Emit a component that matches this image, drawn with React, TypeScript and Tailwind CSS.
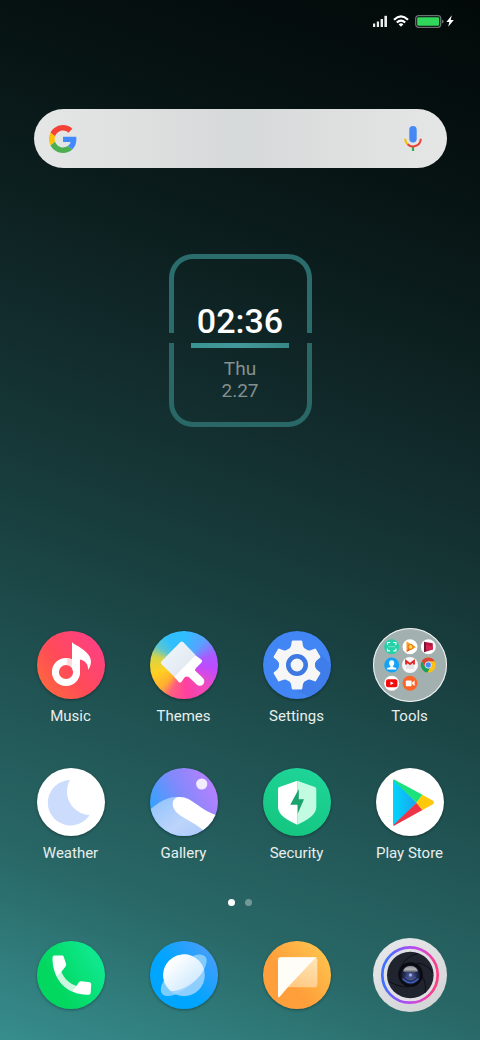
import type { ReactNode } from 'react';
import clsx from 'clsx';

interface LauncherApp {
  name: string;
  /** Classes for the round plate behind the glyph */
  plate: string;
  glyph: ReactNode;
  /** Large icons fill a 74px plate instead of 68px */
  large?: boolean;
}

function StatusBar() {
  return (
    <header className="flex h-[42px] items-center justify-end pr-[26px]">
      <svg className="h-3 w-[14px]" viewBox="0 0 14 12" fill="#e8ecec" aria-label="Signal">
        <rect x="0" y="8.5" width="2.2" height="3.5" />
        <rect x="3.8" y="6.5" width="2.2" height="5.5" />
        <rect x="7.6" y="4" width="2.4" height="8" />
        <rect x="11.4" y="0.8" width="2.6" height="11.2" />
      </svg>
      <svg className="ml-1.5 h-3 w-4" viewBox="0 0 16 12" aria-label="Wi-Fi">
        <g fill="none" stroke="#fff" strokeWidth="2.2">
          <path d="M1 4.7Q8-1.9 15 4.7" />
          <path d="M3.8 7.5Q8 3.7 12.2 7.5" />
        </g>
        <path d="M5.6 9.2Q8 7.4 10.4 9.2L8 11.8Z" fill="#fff" />
      </svg>
      <svg className="ml-1.5 h-[13px] w-[29px]" viewBox="0 0 29 13" aria-label="Battery">
        <rect x="0.7" y="0.7" width="25" height="11.6" rx="2.8" fill="none" stroke="#6b7070" strokeWidth="1.3" />
        <rect x="2.2" y="2.2" width="22" height="8.6" rx="1.4" fill="#30d75b" />
        <path d="M27 4.5q1.6.4 1.6 2t-1.6 2z" fill="#6b7070" />
      </svg>
      <svg className="ml-0.5 h-3 w-2" viewBox="0 0 8 12" fill="#fff" aria-label="Charging">
        <path d="M5.8.3.4 6.9h2.9L2.2 11.7 7.8 5H4.7z" />
      </svg>
    </header>
  );
}

function SearchBar() {
  return (
    <form
      role="search"
      onSubmit={(e) => e.preventDefault()}
      className="mr-[33px] ml-[34px] mt-[67px] flex h-[59px] items-center rounded-full bg-linear-to-r from-[#e5e7e6] via-[#d6d9d9] to-[#e5e7e6] pr-[25px] pl-[15px]"
    >
      <svg className="size-7 shrink-0" viewBox="0 0 48 48" aria-hidden="true">
        <path fill="#f44336" d="M24 9.5c3.54 0 6.71 1.22 9.21 3.6l6.85-6.85C35.9 2.38 30.47 0 24 0 14.62 0 6.51 5.38 2.56 13.22l7.98 6.19C12.43 13.72 17.74 9.5 24 9.5z" />
        <path fill="#448aff" d="M46.98 24.55c0-1.57-.15-3.09-.38-4.55H24v9.02h12.94c-.58 2.96-2.26 5.48-4.78 7.18l7.73 6c4.51-4.18 7.09-10.36 7.09-17.65z" />
        <path fill="#ffc107" d="M10.53 28.59c-.48-1.45-.76-2.99-.76-4.59s.27-3.14.76-4.59l-7.98-6.19C.92 16.46 0 20.12 0 24c0 3.88.92 7.54 2.56 10.78l7.97-6.19z" />
        <path fill="#4caf50" d="M24 48c6.48 0 11.93-2.13 15.89-5.81l-7.73-6c-2.15 1.45-4.92 2.3-8.16 2.3-6.26 0-11.57-4.22-13.47-9.91l-7.98 6.19C6.51 42.62 14.62 48 24 48z" />
      </svg>
      <input type="text" aria-label="Search" className="h-full min-w-0 flex-1 bg-transparent px-3 text-lg text-gray-800 outline-none" />
      <button type="button" aria-label="Voice search">
        <svg className="h-[25px] w-[18px]" viewBox="0 0 18 25" aria-hidden="true">
          <rect x="5.3" y="0" width="7.4" height="16.4" rx="3.7" fill="#4688f4" />
          <path d="M1.2 12.7A7.8 7.8 0 0 0 4 18.6" fill="none" stroke="#fbbc05" strokeWidth="2" />
          <path d="M9 20v5" stroke="#34a853" strokeWidth="2.2" />
          <path d="M3.6 18.2A7.8 7.8 0 0 0 16.8 12.7" fill="none" stroke="#ea4335" strokeWidth="2" />
        </svg>
      </button>
    </form>
  );
}

function ClockWidget() {
  return (
    <section aria-label="Clock" className="relative mx-auto mt-[86px] flex h-[173px] w-[143px] flex-col items-center pt-[46px]">
      {/* Split frame */}
      <div className="absolute inset-x-0 top-0 h-[79px] rounded-t-[24px] border-x-[5px] border-t-[5px] border-[#2b6c6c]" />
      <div className="absolute inset-x-0 bottom-0 h-[84px] rounded-b-[24px] border-x-[5px] border-b-[5px] border-[#2a6868]" />

      <time className="text-[34px] leading-[42px] font-medium text-white">02:36</time>
      <div className="mt-px h-[5px] w-[98px] bg-linear-to-r from-[#3a9492] via-[#43999a] to-[#378886]" />
      <p className="mt-2.5 text-center text-[19px] leading-[22px] text-[#84918f]">
        Thu
        <br />
        2.27
      </p>
    </section>
  );
}

const musicGlyph = (
  <>
    <circle cx="29" cy="41" r="10.6" fill="none" stroke="#fff" strokeWidth="7" />
    <path d="M30 30.4A10.600 10.600 0 0 1 36 33" fill="none" stroke="#ffc2c6" strokeWidth="7" opacity="0.6" />
    <path d="M35 11c2 2.600 6 3.600 11 7.500 9 6.500 10 13.500 5 20.500.5-6-3-9.500-8-10.500V41l-8-3z" fill="#fff" />
  </>
);

const themesGlyph = (
  <>
    <defs>
      <linearGradient id="bristle" x1="0" y1="0" x2="1" y2="1">
        <stop offset="0" stopColor="#f4f8fd" />
        <stop offset="1" stopColor="#dbe4ee" />
      </linearGradient>
    </defs>
    <path d="M39 40 49.800 50.300" stroke="#fff" strokeWidth="9" strokeLinecap="round" />
    <path d="M45 24 51.500 28.700q1.400 1.400 0 2.800L46 37q-2 2.500 0 5L38 46q-2-1-3.500.5L31.300 51q-1.300 1.200-2.600 0L24 45.500z" fill="#fff" />
    <path d="M30.500 11q1.300-1.200 2.600 0L45.600 24 24.300 45.700 11.300 33q-1.200-1.300 0-2.600z" fill="url(#bristle)" />
  </>
);

const GEAR_TEETH = [0, 60, 120, 180, 240, 300];

const settingsGlyph = (
  <>
    <path d="M51 17 75 40 60 72 34 60z" fill="#3976df" opacity="0.5" />
    {GEAR_TEETH.map((angle) => (
      <path
        key={angle}
        d="M24 19Q27.600 17.500 28 15L28.700 10.500Q28.900 9.600 29.900 9.600H38.100Q39.100 9.600 39.300 10.500L40 15Q40.400 17.500 44 19L34 34Z"
        fill="#f6f6f6"
        transform={`rotate(${angle} 34 34)`}
      />
    ))}
    <circle cx="34" cy="34" r="17.5" fill="#f6f6f6" />
    <circle cx="34" cy="34" r="8.7" fill="#f6f6f6" stroke="#3d78e3" strokeWidth="4.6" />
  </>
);

const toolsGlyph = (
  <>
    {/* Scanner */}
    <circle cx="18.7" cy="18.7" r="7.5" fill="#26d0a8" />
    <path d="M14.500 17v-2.500h2.700M20.200 14.500h2.700V17M22.900 20.400v2.500h-2.700M17.200 22.900h-2.700v-2.500" fill="none" stroke="#e3fff6" strokeWidth="1.2" />
    <path d="M15 18.700h7.400" stroke="#7fe6cc" strokeWidth="0.8" />

    {/* Play Music */}
    <circle cx="37" cy="18.7" r="7.5" fill="#fff" />
    <path d="M33.500 13.500 43 18.900l-9.500 5z" fill="#f9a01b" />
    <path d="m33.500 24 2.500-5.500 5 1.600z" fill="#ee5a24" />
    <circle cx="37.600" cy="18.900" r="2.5" fill="#ffd54a" stroke="#e86a1c" strokeWidth="1" />

    {/* Play Movies */}
    <circle cx="55.3" cy="18.7" r="7.5" fill="#fff" />
    <path d="m51 13.800 8.800 1.400v6.200L51 24.300z" fill="#b5163d" />
    <path d="m53 17 6.800 1.400v3L53 22z" fill="#d32450" />
    <path d="M51 13.800v10.500l2-1.500v-7.500z" fill="#6c1737" />

    {/* Contacts */}
    <circle cx="18.7" cy="37" r="7.5" fill="#14a4f5" />
    <path d="M18.700 32.200c3.300 0 3 4.500 1.200 5.800v1l3.400 1.100v1.500h-9.200v-1.500l3.400-1.100v-1c-1.800-1.300-2.100-5.800 1.200-5.800z" fill="#fff" />

    {/* Mail */}
    <circle cx="37" cy="37" r="8" fill="#f7f7f7" />
    <path d="M33 36h8v5h-8z" fill="#e4e4e6" />
    <path d="M33.100 36.500v-3.500l3.900 3 3.900-3v3.500" fill="none" stroke="#e32828" strokeWidth="2" />

    {/* Chrome */}
    <circle cx="55.3" cy="37" r="7.5" fill="#fbc116" />
    <path d="M48.800 33.300a7.500 7.500 0 0 1 13 0h-6.500L52 39z" fill="#db4437" />
    <path d="M48.800 33.300 52.300 39.200l4.500 1.300-2.500 4A7.500 7.500 0 0 1 48.800 33.300z" fill="#189f5b" />
    <circle cx="55.3" cy="37" r="3.2" fill="#4c8bf5" stroke="#e9edf5" strokeWidth="0.9" />

    {/* YouTube */}
    <circle cx="18.7" cy="55.3" r="7.5" fill="#fff" />
    <rect x="13" y="51.3" width="11.4" height="8" rx="2" fill="#f20d0d" />
    <path d="m17.500 53.500 3.300 1.800-3.300 1.800z" fill="#fff" />

    {/* Recorder */}
    <circle cx="37" cy="55.3" r="7.5" fill="#fc6527" />
    <rect x="32.8" y="52.4" width="5.8" height="5.8" rx="1" fill="#fff" />
    <path d="m39.200 54.600 2.400-2v5.400l-2.400-2z" fill="#fff" />
  </>
);

const weatherGlyph = <path d="M33 12A22.700 22.700 0 1 0 52.600 47 23.500 23.500 0 0 1 33 12z" fill="#cbdcfc" />;

const galleryGlyph = (
  <>
    <defs>
      <linearGradient id="dune" x1="0" y1="0" x2="1" y2="1">
        <stop offset="0" stopColor="#8dc2fd" />
        <stop offset="0.6" stopColor="#bdd4fb" />
        <stop offset="1" stopColor="#a9c9fa" />
      </linearGradient>
    </defs>
    <circle cx="51.7" cy="16" r="5.6" fill="#f1edfe" />
    <path d="M0 41.500C9 34 18 28 28 29l30 33v6H0z" fill="url(#dune)" />
    <path d="M28 29c8-.5 12 2.500 19 7.500 6 4.500 12 8.500 20 11l-7 20-7.500-6C44 55 38 52.500 31 48c-11-7.500-10-17-3-19z" fill="#fff" />
  </>
);

const securityGlyph = (
  <>
    <path d="M34.300 12.700 16.500 19q-1.500.5-1.500 2v18c0 8 9.500 13.500 19.300 17.700z" fill="#fff" />
    <path d="M34.300 12.700 51.800 19q1.500.5 1.500 2v18c0 8-9.500 13.500-19 17.700z" fill="#c2fae2" />
    <path d="M35.800 21v10.300H41l-6.300 14.500v-9.100h-7.500z" fill="#1ba36e" />
  </>
);

const playGlyph = (
  <>
    <defs>
      <linearGradient id="play-blue" x1="0" y1="0" x2="1" y2="0">
        <stop offset="0" stopColor="#00d5fd" />
        <stop offset="1" stopColor="#1ba5ef" />
      </linearGradient>
    </defs>
    <path d="M17 13v43q0 2 1.500 1.400L40.500 34.700 18.500 11.800Q17 11.200 17 13z" fill="url(#play-blue)" />
    <path d="M18.500 11.700 46.500 26.800 40.500 34.700 17.500 12.300Q17.700 11.300 18.500 11.700z" fill="#1be27b" />
    <path d="M18.500 57.600 46.500 42 40.500 34.700 17.500 57Q17.700 58 18.500 57.600z" fill="#ee3548" />
    <path d="M46.300 26.800 57 32.800q2 1.700 0 3.400L46.300 42l-6-7.300z" fill="#ffc80a" />
  </>
);

const phoneGlyph = (
  <>
    <path d="M17.500 14.600h7.700q1.200 0 1.500 1.200l2.400 7.200q.3 1.200-.5 2.200L24.300 31c2.700 6.500 8 11.500 15 14l2.700-3.800q.9-1.200 2.300-1l8.400 1q1.600.3 1.500 2l-.5 8.500q-.1 2-2 2C31.500 54.500 15.300 40 15.500 16.800q0-2.200 2-2.200z" fill="#fff" />
    <path d="M24.300 31c2.700 6.500 8 11.500 15 14l-4 5.500C29 48 22.500 42 20 35z" fill="#8eeab8" opacity="0.45" />
  </>
);

const browserGlyph = (
  <>
    <defs>
      <linearGradient id="planet" x1="0" y1="0" x2="1" y2="1">
        <stop offset="0.2" stopColor="#fff" />
        <stop offset="0.8" stopColor="#cfeafe" />
      </linearGradient>
    </defs>
    <ellipse cx="33.700" cy="34.300" rx="28.500" ry="12" transform="rotate(-41 33.700 34.300)" fill="#8fd3fb" opacity="0.85" />
    <circle cx="34" cy="34.3" r="20.8" fill="#a5d6ff" opacity="0.85" />
    <path d="M20.500 50A20.800 20.800 0 1 1 54 28.500C48 40 33 50.500 20.500 50z" fill="url(#planet)" />
  </>
);

const messagesGlyph = (
  <>
    <defs>
      <linearGradient id="bubble" x1="0.7" y1="0" x2="0.3" y2="1">
        <stop offset="0" stopColor="#ffe3b4" />
        <stop offset="1" stopColor="#ffc981" />
      </linearGradient>
    </defs>
    <path d="M18 16.200h34q2.300 0 2.300 2.300V44q0 2.300-2.300 2.300H24z" fill="url(#bubble)" />
    <path d="M17.300 16.200H53L25 46l-8.500 10q-1.500 1-1.500-1V18.500q0-2.300 2.300-2.300z" fill="#fffdf7" />
  </>
);

const cameraGlyph = (
  <>
    <defs>
      <linearGradient id="cam-ring" x1="0" y1="0.6" x2="1" y2="0.7">
        <stop offset="0.05" stopColor="#4070ff" />
        <stop offset="0.4" stopColor="#a44df5" />
        <stop offset="0.65" stopColor="#d04ad8" />
        <stop offset="0.95" stopColor="#ff3d82" />
      </linearGradient>
      <radialGradient id="cam-lens" cx="0.5" cy="0.55" r="0.5">
        <stop offset="0" stopColor="#5a6cae" />
        <stop offset="0.55" stopColor="#28335f" />
        <stop offset="1" stopColor="#10142a" />
      </radialGradient>
      <linearGradient id="cam-shine" x1="0" y1="0" x2="0" y2="1">
        <stop offset="0" stopColor="#8d8f94" />
        <stop offset="0.5" stopColor="#b4b5b9" />
        <stop offset="1" stopColor="#3b3f55" />
      </linearGradient>
    </defs>
    <circle cx="37" cy="37" r="27.7" fill="#e0e0e4" stroke="url(#cam-ring)" strokeWidth="2.7" />
    <circle cx="37.3" cy="37" r="23.3" fill="#20242f" />
    {/* Shutter blades */}
    <g fill="none" stroke="#0e1018" strokeWidth="1">
      <path d="M45 15.500Q33 18 28 29" />
      <path d="M60 35Q55 26 44 25" />
      <path d="M52 55Q54 46 49 38" />
      <path d="M16 43Q24 49 36 49" />
    </g>
    <circle cx="37.5" cy="36.5" r="12.3" fill="#0a0b10" />
    <circle cx="37.5" cy="36.7" r="9.8" fill="url(#cam-lens)" />
    <path d="M30 33.500Q31.500 28 37.500 28T45 33.500Q37.500 36 30 33.500z" fill="url(#cam-shine)" />
    <path d="M29.500 40.500Q37.500 49 45.500 40.500" fill="none" stroke="#3f66c4" strokeWidth="1.2" />
    <path d="M32 39Q37.500 44 43 39" fill="none" stroke="#5a62b0" strokeWidth="0.8" />
    <circle cx="37.5" cy="37" r="1.4" fill="#a9b4f0" />
  </>
);

const smallPlate = 'size-[68px] shadow-[0_1px_3px_rgba(0,0,0,0.35)]';

const homeApps: LauncherApp[] = [
  { name: 'Music', plate: `${smallPlate} bg-[linear-gradient(50deg,#ff6a3c_8%,#ff4a59_45%,#ff3f86_90%)]`, glyph: musicGlyph },
  {
    name: 'Themes',
    plate: `${smallPlate} bg-[conic-gradient(#2fbfff_0deg,#5aa0ff_40deg,#a95cff_70deg,#bd4bff_95deg,#f04ac0_135deg,#ff409e_175deg,#ff5f80_205deg,#ffae30_225deg,#ffd021_255deg,#d8d445_285deg,#5cc6d0_305deg,#2fbfff_330deg)]`,
    glyph: themesGlyph,
  },
  { name: 'Settings', plate: `${smallPlate} bg-[#4285f4]`, glyph: settingsGlyph },
  { name: 'Tools', plate: 'size-[74px] bg-[#a2b1b0] ring-1 ring-inset ring-[#eef1f1]', glyph: toolsGlyph, large: true },
  { name: 'Weather', plate: `${smallPlate} bg-white`, glyph: weatherGlyph },
  { name: 'Gallery', plate: `${smallPlate} bg-[linear-gradient(65deg,#36a2ff_15%,#8189fb_50%,#b880ff_90%)]`, glyph: galleryGlyph },
  { name: 'Security', plate: `${smallPlate} bg-[linear-gradient(200deg,#20d69c,#13c47c)]`, glyph: securityGlyph },
  { name: 'Play Store', plate: `${smallPlate} bg-white`, glyph: playGlyph },
];

const dockApps: LauncherApp[] = [
  { name: 'Phone', plate: `${smallPlate} bg-[linear-gradient(60deg,#02d75f_30%,#0ee78b_80%)]`, glyph: phoneGlyph },
  { name: 'Browser', plate: `${smallPlate} bg-[linear-gradient(50deg,#00a5ff_45%,#4a9dfb_90%)]`, glyph: browserGlyph },
  { name: 'Messages', plate: `${smallPlate} bg-[linear-gradient(50deg,#ff9f3b_40%,#fec44d_90%)]`, glyph: messagesGlyph },
  { name: 'Camera', plate: 'size-[74px] bg-[linear-gradient(150deg,#e9e9eb,#d0d2d3)]', glyph: cameraGlyph, large: true },
];

function AppButton({ app, showLabel = false }: { app: LauncherApp; showLabel?: boolean }) {
  return (
    <button type="button" aria-label={app.name} className="flex flex-col items-center">
      <span className="flex h-[76px] items-center justify-center">
        <span className={clsx('block overflow-hidden rounded-full', app.plate)}>
          <svg className="h-full w-full" viewBox={app.large ? '0 0 74 74' : '0 0 68 68'} aria-hidden="true">
            {app.glyph}
          </svg>
        </span>
      </span>
      {showLabel && <span className="mt-[3px] text-[15px] leading-5 text-[#e9efee]">{app.name}</span>}
    </button>
  );
}

export default function App() {
  return (
    <div className="flex min-h-screen flex-col bg-[linear-gradient(200deg,#030909_0%,#061111_14%,#0b1c1c_26%,#122b2c_40%,#183c3c_54%,#205252_69%,#286766_84%,#378d8d_100%)] font-[Roboto,sans-serif]">
      <StatusBar />
      <SearchBar />
      <ClockWidget />

      <main className="mt-auto grid grid-cols-4 gap-y-[38px] px-3.5 pt-10">
        {homeApps.map((app) => (
          <AppButton key={app.name} app={app} showLabel />
        ))}
      </main>

      {/* Page indicator */}
      <div className="mt-9 flex justify-center gap-2.5">
        <span className="size-[7px] rounded-full bg-white" />
        <span className="size-[7px] rounded-full bg-white/35" />
      </div>

      <nav aria-label="Dock" className="mt-[31px] mb-[27px] grid grid-cols-4 px-3.5">
        {dockApps.map((app) => (
          <AppButton key={app.name} app={app} />
        ))}
      </nav>
    </div>
  );
}
